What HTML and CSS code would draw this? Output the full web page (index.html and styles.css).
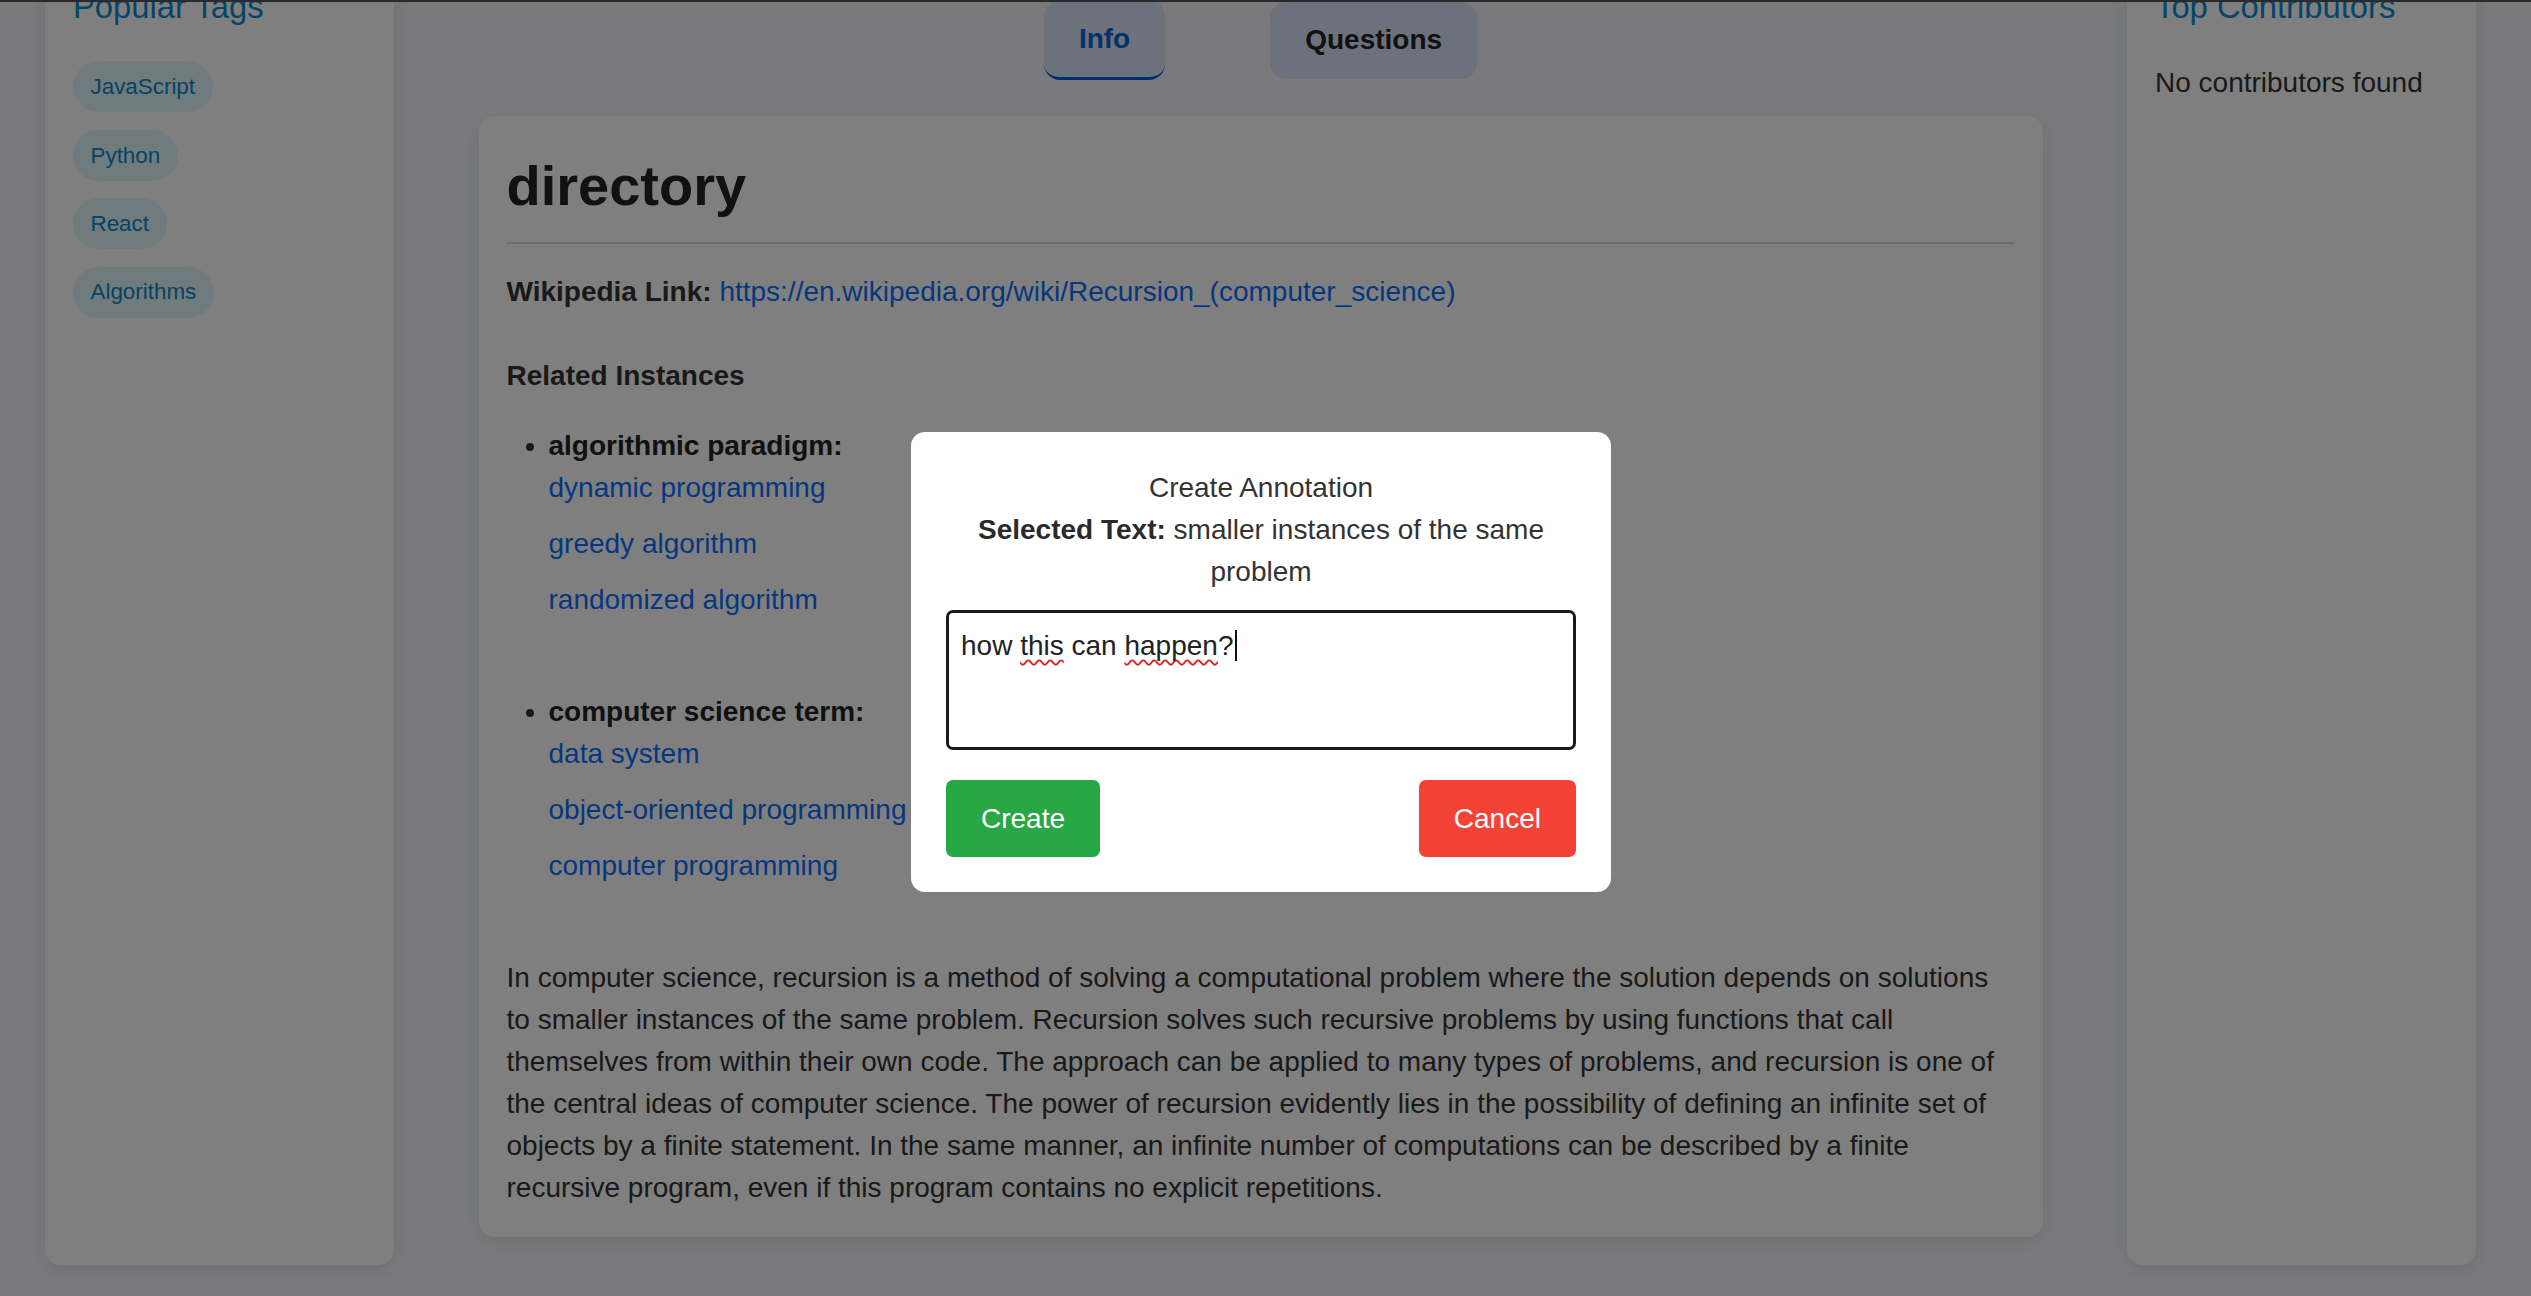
FILE: index.html
```html
<!DOCTYPE html>
<html lang="en">
<head>
<meta charset="utf-8">
<title>directory</title>
<link rel="stylesheet" href="styles.css">
</head>
<body>
<div class="topline"></div>
<div class="layout">
  <aside class="sidebar">
    <h3 class="side-title">Popular Tags</h3>
    <div class="tags">
      <span class="tag">JavaScript</span>
      <span class="tag">Python</span>
      <span class="tag">React</span>
      <span class="tag">Algorithms</span>
    </div>
  </aside>

  <main class="main">
    <div class="tabs">
      <button class="tab tab-active">Info</button>
      <button class="tab">Questions</button>
    </div>
    <section class="card">
      <h1 class="card-title">directory</h1>
      <p class="wiki"><strong>Wikipedia Link:</strong> <a class="link" href="#">https://en.wikipedia.org/wiki/Recursion_(computer_science)</a></p>
      <h4 class="related-title">Related Instances</h4>
      <ul class="instances">
        <li class="instance">
          <strong class="instance-label">algorithmic paradigm:</strong>
          <a class="link inst-link" href="#">dynamic programming</a>
          <a class="link inst-link" href="#">greedy algorithm</a>
          <a class="link inst-link" href="#">randomized algorithm</a>
        </li>
        <li class="instance">
          <strong class="instance-label">computer science term:</strong>
          <a class="link inst-link" href="#">data system</a>
          <a class="link inst-link" href="#">object-oriented programming</a>
          <a class="link inst-link" href="#">computer programming</a>
        </li>
      </ul>
      <p class="desc">In computer science, recursion is a method of solving a computational problem where the solution depends on solutions to smaller instances of the same problem. Recursion solves such recursive problems by using functions that call themselves from within their own code. The approach can be applied to many types of problems, and recursion is one of the central ideas of computer science. The power of recursion evidently lies in the possibility of defining an infinite set of objects by a finite statement. In the same manner, an infinite number of computations can be described by a finite recursive program, even if this program contains no explicit repetitions.</p>
    </section>
  </main>

  <aside class="sidebar">
    <h3 class="side-title">Top Contributors</h3>
    <p class="empty">No contributors found</p>
  </aside>
</div>

<div class="overlay"></div>

<div class="modal">
  <div class="modal-title">Create Annotation</div>
  <div class="modal-selected"><strong>Selected Text:</strong> smaller instances of the same problem</div>
  <div class="input-box">how <span class="misspelt">this</span> can <span class="misspelt">happen</span>?<span class="caret"></span></div>
  <div class="modal-actions">
    <button class="btn btn-create">Create</button>
    <button class="btn btn-cancel">Cancel</button>
  </div>
</div>
</body>
</html>
```

FILE: styles.css
```css
html, body {
  margin: 0;
  padding: 0;
  overflow: hidden;
  height: 100%;
}

body {
  background: #f4f5f8;
  font-family: "Liberation Sans", Arial, sans-serif;
  font-size: 28px;
  line-height: 1.5;
  color: #333;
}

.topline {
  position: fixed;
  top: 0;
  left: 0;
  right: 0;
  height: 2px;
  background: #555;
  z-index: 5;
}

.layout {
  display: grid;
  grid-template-columns: 349px 1564px 349px;
  column-gap: 84.5px;
  padding-left: 45px;
  align-items: start;
}

.sidebar {
  box-sizing: border-box;
  margin-top: -45.8px;
  height: 1310.8px;
  padding: 28px;
  background: #fff;
  border-radius: 16px;
  box-shadow: 0 5px 18px rgba(0, 0, 0, 0.09);
}

.side-title {
  margin: 0;
  font-size: 32.76px;
  font-weight: normal;
  line-height: 1.5;
  color: #0a8ad4;
}

.tags {
  display: flex;
  flex-direction: column;
  align-items: flex-start;
  gap: 17.3px;
  margin-top: 30px;
}

.tag {
  padding: 8.75px 17.5px;
  font-size: 22.4px;
  line-height: 1.5;
  background: #e0f7fa;
  color: #0a86c8;
  border-radius: 30px;
}

.empty {
  margin: 30.4px 0 0;
}

.main {
  display: flex;
  flex-direction: column;
}

.tabs {
  display: flex;
  justify-content: center;
  align-items: center;
  gap: 105px;
}

.tab {
  font: inherit;
  font-weight: bold;
  line-height: 42px;
  padding: 17.5px 35px;
  border: none;
  border-radius: 16px;
  background: #d6e4f8;
  color: #222;
}

.tab-active {
  color: #0b62d6;
  border-bottom: 3px solid #0b5ed7;
}

.card {
  margin-top: 36px;
  padding: 31px 28px 27.6px;
  background: #fff;
  border-radius: 16px;
  box-shadow: 0 5px 18px rgba(0, 0, 0, 0.09);
}

.card-title {
  margin: 0;
  font-size: 56px;
  line-height: 1.4;
  padding-bottom: 16.6px;
  border-bottom: 2px solid #d6d6d6;
  color: #222;
}

.wiki {
  margin: 26.7px 0 0;
}

.link {
  color: #0d6efd;
  text-decoration: none;
}

.related-title {
  margin: 42px 0 28px;
  font-size: 28px;
}

.instances {
  margin: 0;
  padding-left: 42px;
}

.instance + .instance {
  margin-top: 70px;
}

.instance-label {
  display: block;
  color: #222;
}

.inst-link {
  display: block;
}

.inst-link + .inst-link {
  margin-top: 14px;
}

.desc {
  margin: 70.7px 0 0;
}

.overlay {
  position: fixed;
  inset: 0;
  background: rgba(0, 0, 0, 0.5);
  z-index: 10;
}

.modal {
  position: fixed;
  left: 911px;
  top: 432px;
  width: 700px;
  box-sizing: border-box;
  padding: 35px 35px 35px;
  background: #fff;
  border-radius: 14px;
  z-index: 20;
  text-align: center;
  line-height: 42px;
  color: #333;
}

.modal-selected {
  margin-bottom: 17.3px;
}

.modal-selected strong {
  color: #2a2a2a;
}

.input-box {
  box-sizing: border-box;
  height: 140px;
  padding: 17px 12px 10px;
  border: 3px solid #1a1a1a;
  border-radius: 7px;
  text-align: left;
  line-height: normal;
  color: #222;
}

.misspelt {
  text-decoration: underline wavy #e02020;
  text-decoration-thickness: 1.5px;
  text-decoration-skip-ink: none;
  text-underline-offset: 4px;
}

.caret {
  display: inline-block;
  width: 1.5px;
  height: 31px;
  margin-left: 2px;
  vertical-align: -6px;
  background: #111;
}

.modal-actions {
  display: flex;
  justify-content: space-between;
  margin-top: 30px;
}

.btn {
  font: inherit;
  line-height: 42px;
  padding: 17.5px 35px;
  border: none;
  border-radius: 7px;
  color: #fff;
}

.btn-create {
  background: #28a745;
}

.btn-cancel {
  background: #f44336;
}
```
